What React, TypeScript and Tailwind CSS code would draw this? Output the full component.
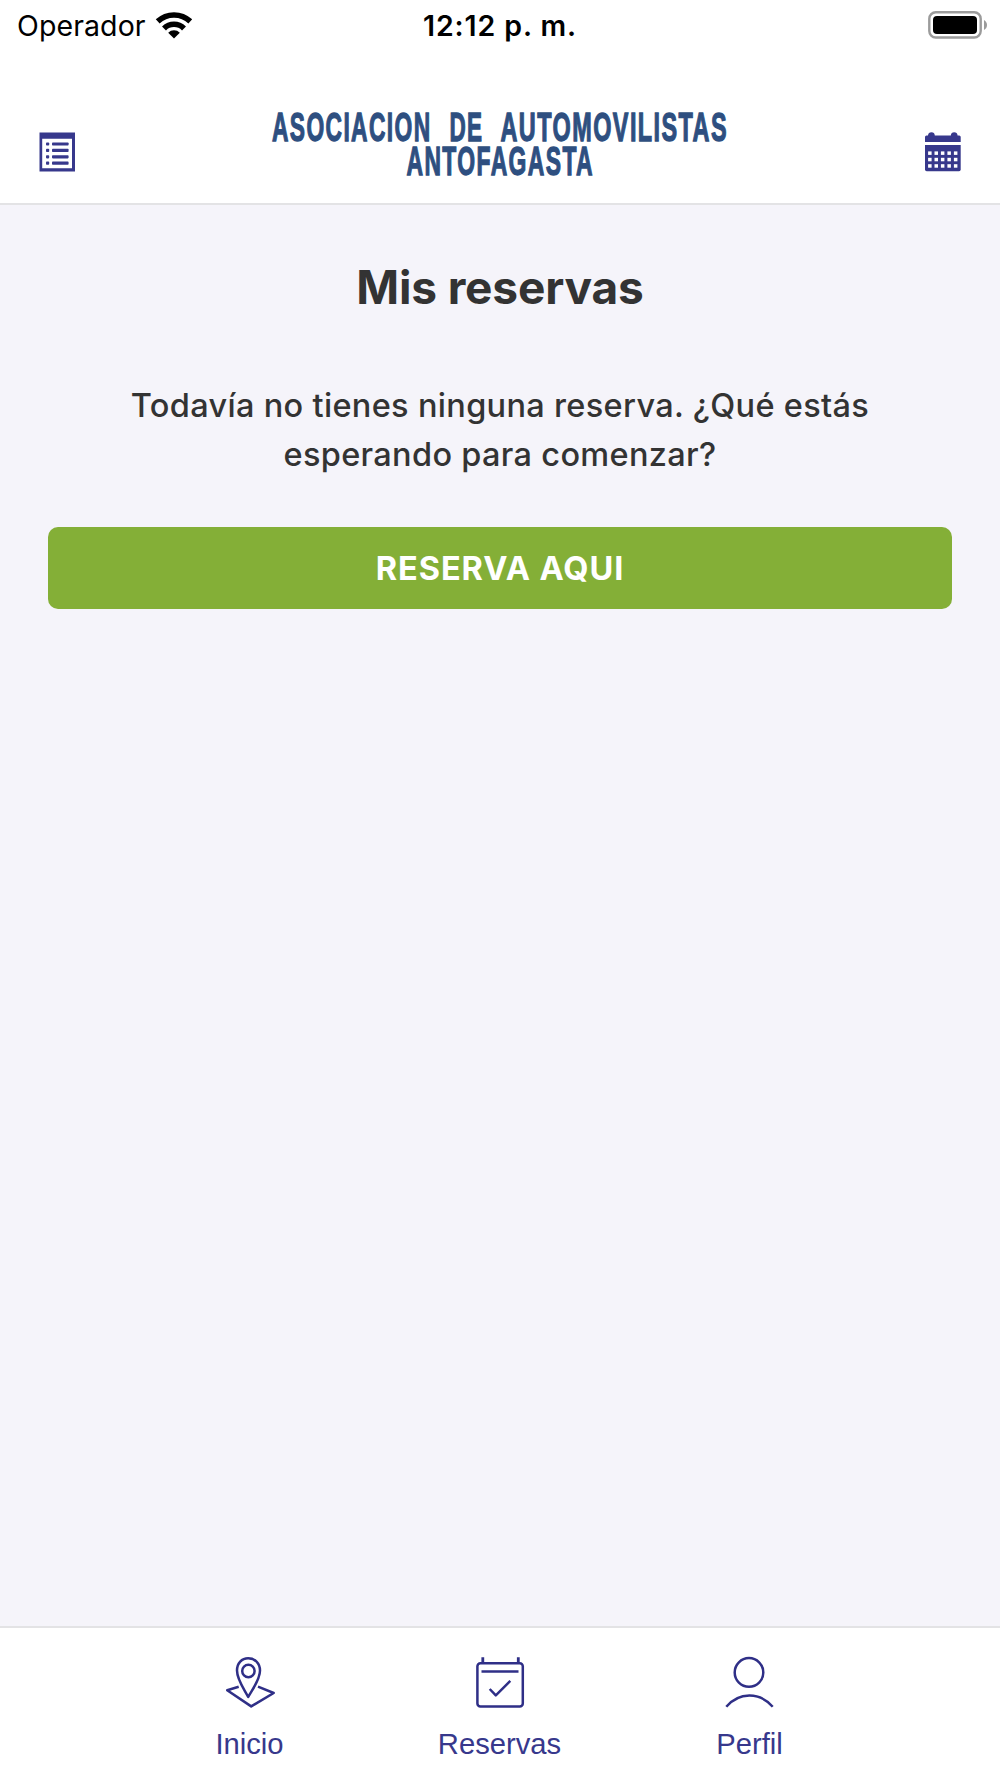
import type { ReactNode } from "react";

function WifiIcon() {
  return (
    <svg className="h-[27px] w-[38px]" viewBox="0 0 38 27" fill="none" stroke="#000" strokeWidth="5.6">
      <path d="M2.7 9.4 A 23.8 23.8 0 0 1 35.3 9.4" />
      <path d="M9 16.4 A 14.2 14.2 0 0 1 29 16.4" />
      <path d="M19 26.6 L13.2 20.7 A 8.3 8.3 0 0 1 24.8 20.7 Z" fill="#000" stroke="none" />
    </svg>
  );
}

function BatteryIcon() {
  return (
    <svg className="h-[28px] w-[60px]" viewBox="0 0 60 28" fill="none">
      <rect x="1.3" y="1.3" width="51.4" height="25.2" rx="6.5" stroke="#9b9b9b" strokeWidth="2.4" />
      <rect x="5" y="5" width="44" height="18" rx="4" fill="#000" />
      <path d="M56 9 C 60 11 60 17 56 19 Z" fill="#9b9b9b" />
    </svg>
  );
}

function ListIcon() {
  return (
    <svg className="h-[40px] w-[36px]" viewBox="0 0 36 40" fill="#37388c">
      <path fillRule="evenodd" d="M0.5 0.5 H36 V39.5 H0.5 Z M3.2 6.8 V36.2 H33 V6.8 Z" />
      {[10.4, 16.8, 23.2, 29.6].map((y) => (
        <g key={y}>
          <rect x="7" y={y} width="3.2" height="3.2" rx="0.8" />
          <rect x="13" y={y} width="16.6" height="3.2" rx="0.8" />
        </g>
      ))}
    </svg>
  );
}

function CalendarIcon() {
  return (
    <svg className="h-[40px] w-[36px]" viewBox="0 0 36 40" fill="#37388c">
      <path d="M0 10 V5 Q0 3.5 1.5 3.5 H3 Q3.3 0.3 6.5 0.3 Q9.5 0.3 9.8 3.5 H25.8 Q26.2 0.3 29.2 0.3 Q32.2 0.3 32.6 3.5 H34.2 Q35.7 3.5 35.7 5 V10 Z" />
      <path d="M0 13 H35.7 V37.5 Q35.7 39.3 34 39.3 H1.7 Q0 39.3 0 37.5 Z" />
      {[19.4, 25.8, 32.2].map((y) =>
        [3.1, 9.5, 15.9, 22.4, 28.9].map((x) => (
          <rect key={`${x}-${y}`} x={x} y={y} width="3.5" height="3.5" fill="#fff" />
        ))
      )}
    </svg>
  );
}

function Logo() {
  return (
    <svg
      className="h-[100px] w-[480px]"
      viewBox="260 95 480 100"
      fill="#2e4f80"
      stroke="#2e4f80"
      strokeWidth="1.3"
      fontFamily="'Liberation Sans', Arial, sans-serif"
      fontWeight="700"
      fontSize="41"
      letterSpacing="2.5"
    >
      <text x="272" y="141" textLength="159.5" lengthAdjust="spacingAndGlyphs">ASOCIACION</text>
      <text x="449.5" y="141" textLength="34" lengthAdjust="spacingAndGlyphs">DE</text>
      <text x="500.5" y="141" textLength="227.5" lengthAdjust="spacingAndGlyphs">AUTOMOVILISTAS</text>
      <text x="406.5" y="175.2" textLength="187.5" lengthAdjust="spacingAndGlyphs">ANTOFAGASTA</text>
    </svg>
  );
}

function TabIcon({ children }: { children: ReactNode }) {
  return (
    <svg
      className="h-[54px] w-[54px]"
      viewBox="0 0 54 54"
      fill="none"
      stroke="#2f2f87"
      strokeWidth="2.5"
      strokeLinejoin="round"
    >
      {children}
    </svg>
  );
}

const tabs = [
  {
    label: "Inicio",
    icon: (
      <TabIcon>
        <path d="M25.2 42 C21.5 34.5 14 25 14 15.5 C14 8 18.8 3.2 25.2 3.2 C31.7 3.2 37 8 37 15.5 C37 25 29.2 34.5 25.2 42 Z" />
        <circle cx="25.4" cy="16" r="6.2" />
        <path d="M15.7 31.8 L4.2 35.2 L28.2 51.4 L50.7 38 L35 31.7" />
      </TabIcon>
    )
  },
  {
    label: "Reservas",
    icon: (
      <TabIcon>
        <rect x="4.4" y="8.2" width="45.4" height="43.3" rx="3" />
        <path d="M9.8 2.3 V8 M45.3 2.3 V8" strokeWidth="2.8" />
        <path d="M8.5 16.5 H45.5" />
        <path d="M16.7 34 L22.8 40.4 L37.3 25.8" />
      </TabIcon>
    )
  },
  {
    label: "Perfil",
    icon: (
      <TabIcon>
        <circle cx="26" cy="17.4" r="14.3" />
        <path d="M3.3 51.7 C16 37 36.5 36.5 49.7 51.7" />
      </TabIcon>
    )
  }
];

export default function App() {
  return (
    <div className="flex h-[1778px] w-[1000px] flex-col overflow-hidden bg-[#f5f4fa] font-['Inter',sans-serif]">
      <header className="h-[205px] shrink-0 border-b-2 border-[#e3e3e5] bg-white">
        <div className="grid h-[51px] grid-cols-3 items-center text-[28.5px] leading-none text-black">
          <div className="flex items-center gap-[9px] pl-[17px]">
            <span className="pt-0.5 tracking-[0.1px]">Operador</span>
            <WifiIcon />
          </div>
          <span className="pt-0.5 text-center font-semibold tracking-[0.9px]">12:12 p. m.</span>
          <div className="flex justify-end pr-3 pb-[2px]">
            <BatteryIcon />
          </div>
        </div>
        <div className="flex items-start justify-between px-[39px] pt-[44px]">
          <button type="button" aria-label="Lista" className="mt-[37px]">
            <ListIcon />
          </button>
          <Logo />
          <button type="button" aria-label="Calendario" className="mt-[37px]">
            <CalendarIcon />
          </button>
        </div>
      </header>

      <main className="flex flex-1 flex-col px-12 text-center text-[#333]">
        <h1 className="mt-[52px] text-[46px] leading-[60px] font-bold tracking-[-0.15px]">Mis reservas</h1>
        <p className="mt-[65px] text-[32.5px] leading-[48.5px] font-medium tracking-[0.32px]">
          Todavía no tienes ninguna reserva. ¿Qué estás
          <br />
          esperando para comenzar?
        </p>
        <button
          type="button"
          className="mt-[47.5px] h-[82px] rounded-[10px] bg-[#84af37] pt-[3px] text-[32.5px] leading-none font-bold tracking-[0.9px] text-white"
        >
          RESERVA AQUI
        </button>
      </main>

      <nav className="flex h-[152px] shrink-0 justify-center border-t-2 border-[#e3e3e5] bg-white">
        {tabs.map((tab) => (
          <button key={tab.label} type="button" className="flex w-[250px] flex-col items-center pt-[27px]">
            {tab.icon}
            <span className="mt-[18px] pr-px font-['Liberation_Sans',Arial,sans-serif] text-[29.2px] leading-[34px] text-[#37388c]">
              {tab.label}
            </span>
          </button>
        ))}
      </nav>
    </div>
  );
}
